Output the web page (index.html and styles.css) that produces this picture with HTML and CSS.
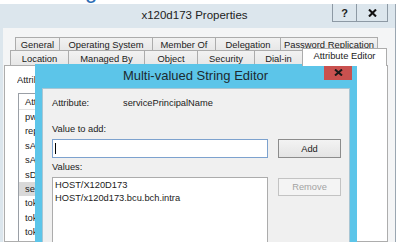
FILE: index.html
```html
<!DOCTYPE html>
<html>
  <head>
    <meta charset="utf-8">
    <title>x120d173 Properties</title>
    <link rel="stylesheet" href="styles.css">
  </head>
<body>
  <div class="screen">
    <div class="peek"><span>g</span></div>

    <div class="props">
      <div class="props-bar">
        <div class="props-title">x120d173 Properties</div>
        <div class="caption-buttons">
          <button class="caption-btn caption-help">?</button>
          <button class="caption-btn caption-close">
            <svg width="9" height="8" viewBox="0 0 9 8"><path d="M1 0.5 L8 7.5 M8 0.5 L1 7.5" stroke="#111" stroke-width="2.1"/></svg>
          </button>
        </div>
      </div>

      <div class="props-client">
        <div class="tab-row tab-row-back">
          <div class="tab">General</div>
          <div class="tab">Operating System</div>
          <div class="tab">Member Of</div>
          <div class="tab">Delegation</div>
          <div class="tab">Password Replication</div>
        </div>
        <div class="tab-row tab-row-front">
          <div class="tab">Location</div>
          <div class="tab">Managed By</div>
          <div class="tab">Object</div>
          <div class="tab">Security</div>
          <div class="tab">Dial-in</div>
          <div class="tab tab-active">Attribute Editor</div>
        </div>

        <div class="tab-panel">
          <!-- only the left strip of the page shows beside the editor -->
          <div class="panel-strip">
            <div class="field-label">Attributes:</div>
            <div class="attr-list">
              <div class="attr-head">Attribute</div>
              <div class="attr-item">pwdLastSet</div>
              <div class="attr-item">replPropertyMetaData</div>
              <div class="attr-item">sAMAccountName</div>
              <div class="attr-item">sAMAccountType</div>
              <div class="attr-item">sDRightsEffective</div>
              <div class="attr-item attr-selected">servicePrincipalName</div>
              <div class="attr-item">tokenGroups</div>
              <div class="attr-item">tokenGroupsGlobalAndUniversal</div>
              <div class="attr-item">tokenGroupsNoGCAcceptable</div>
            </div>
          </div>
        </div>
      </div>
    </div>

    <!-- editor window opened on top of the properties sheet -->
    <div class="mv-dialog">
      <div class="mv-bar">
        <div class="mv-title">Multi-valued String Editor</div>
        <button class="mv-close">
          <svg width="9" height="7" viewBox="0 0 9 7"><path d="M1 0.5 L8 6.5 M8 0.5 L1 6.5" stroke="#1a1a1a" stroke-width="2"/></svg>
        </button>
      </div>
      <div class="mv-body">
        <div class="mv-row">
          <span class="mv-label">Attribute:</span>
          <span>servicePrincipalName</span>
        </div>
        <div class="mv-caption mv-caption-first">Value to add:</div>
        <div class="mv-grid">
          <div class="mv-input"><span class="caret"></span></div>
          <button class="mv-btn mv-btn-default">Add</button>
        </div>
        <div class="mv-caption">Values:</div>
        <div class="mv-grid">
          <div class="mv-values">
            <div>HOST/X120D173</div>
            <div>HOST/x120d173.bcu.bch.intra</div>
          </div>
          <button class="mv-btn mv-btn-remove" disabled>Remove</button>
        </div>
      </div>
    </div>
  </div>
</body>
</html>
```

FILE: styles.css
```css
html, body {
  margin: 0;
}
body {
  width: 403px;
  height: 242px;
  overflow: hidden;
  background: #fff;
  font-family: "Liberation Sans", Arial, sans-serif;
  font-size: 9.4px;
  color: #1b1b1b;
}
button {
  font-family: inherit;
  font-size: inherit;
  color: inherit;
  padding: 0;
  margin: 0;
}
.screen {
  position: relative;
  width: 403px;
  height: 242px;
  overflow: hidden;
}

/* bit of the page behind the window */
.peek {
  height: 4px;
  overflow: hidden;
  padding-left: 85px;
}
.peek span {
  display: block;
  font-size: 22px;
  line-height: 22px;
  margin-top: -20px;
  color: #2d6db5;
}

/* properties window */
.props {
  width: 395px;
  height: 238px;
  border-right: 1px solid #9aa6b1;
  background: #dce6ed;
  display: flex;
  flex-direction: column;
}
.props-bar {
  height: 24px;
  display: flex;
  align-items: flex-start;
  flex: 0 0 auto;
}
.props-title {
  flex: 1;
  text-align: center;
  padding-left: 57px;
  font-size: 11.5px;
  line-height: 22px;
  color: #222;
}
.caption-buttons {
  display: flex;
  margin-right: 7px;
  border: 1px solid #8d99a4;
  border-top: none;
}
.caption-btn {
  height: 17px;
  border: none;
  background: #dce6ed;
  display: flex;
  align-items: center;
  justify-content: center;
}
.caption-help {
  width: 24px;
  border-right: 1px solid #8d99a4;
  font-weight: bold;
  font-size: 11px;
}
.caption-close {
  width: 30px;
}

.props-client {
  flex: 1;
  margin-left: 3px;
  background: #f4f5f6;
  padding-top: 9px;
  display: flex;
  flex-direction: column;
  min-height: 0;
}
.tab-row {
  display: grid;
  flex: 0 0 auto;
}
.tab-row-back {
  height: 13px;
  padding-left: 12px;
  grid-template-columns: 44px 93px 63px 65px 98px;
}
.tab-row-front {
  height: 15px;
  padding-left: 7px;
  grid-template-columns: 58px 76px 53px 57px 48px 85px;
}
.tab {
  border-top: 1px solid #acacac;
  border-left: 1px solid #acacac;
  background: linear-gradient(#f2f2f2, #e7e7e7);
  text-align: center;
  line-height: 13px;
  white-space: nowrap;
  overflow: hidden;
}
.tab:last-child {
  border-right: 1px solid #acacac;
}
.tab-row-front .tab {
  line-height: 15px;
}
.tab-active {
  position: relative;
  z-index: 1;
  background: #fff;
  margin-top: -2px;
  margin-bottom: -1px;
  line-height: 14px !important;
}

.tab-panel {
  flex: 1;
  background: #fff;
  border: 1px solid #adadad;
  margin: 0 7px 0 1px;
  padding: 8px 0 0 12px;
  overflow: hidden;
}
.panel-strip {
  width: 21px;
  overflow: hidden;
}
.field-label {
  line-height: 12px;
  white-space: nowrap;
}
.attr-list {
  margin: 7px 0 0 1px;
  width: 340px;
  height: 200px;
  border: 1px solid #9a9fa6;
}
.attr-head {
  height: 15px;
  line-height: 15px;
  padding-left: 6px;
  border-bottom: 1px solid #e3e3e3;
}
.attr-item {
  height: 14.4px;
  line-height: 14.4px;
  padding-left: 6px;
  white-space: nowrap;
}
.attr-selected {
  background: #d9d9d9;
}

/* multi-valued string editor */
.mv-dialog {
  position: absolute;
  left: 35px;
  top: 64px;
  width: 322px;
  height: 200px;
  box-sizing: border-box;
  padding: 0 7px;
  background: #5cc5e9;
  display: flex;
  flex-direction: column;
}
.mv-bar {
  height: 24px;
  display: flex;
  align-items: flex-start;
  flex: 0 0 auto;
}
.mv-title {
  flex: 1;
  text-align: center;
  padding-left: 25px;
  font-size: 13px;
  line-height: 24px;
  color: #1d2a30;
}
.mv-close {
  width: 28px;
  height: 16px;
  margin-right: -2px;
  border: none;
  background: #c9514f;
  display: flex;
  align-items: center;
  justify-content: center;
}
.mv-body {
  flex: 1;
  background: #f0f0f0;
  border: 1px solid #a8c6d4;
  padding: 8px 9px 0 9px;
  font-size: 9.3px;
}
.mv-row {
  display: flex;
  line-height: 12px;
}
.mv-label {
  width: 71px;
}
.mv-caption {
  line-height: 12px;
  margin-top: 3px;
}
.mv-caption-first {
  margin-top: 14px;
}
.mv-grid {
  display: grid;
  grid-template-columns: 216px 63px;
  column-gap: 10px;
  align-items: start;
  margin-top: 4px;
}
.mv-input {
  height: 19px;
  box-sizing: border-box;
  border: 1px solid #7da2ce;
  background: #fff;
}
.caret {
  display: block;
  width: 1px;
  height: 11px;
  margin: 3px 0 0 2px;
  background: #000;
}
.mv-btn {
  height: 19px;
  border: 1px solid #8c8c8c;
  background: linear-gradient(#f3f3f3, #e4e4e4);
}
.mv-btn-remove {
  height: 18px;
  margin-top: 1px;
  border-color: #c3c3c3;
  background: #f4f4f4;
  color: #a3a3a3;
}
.mv-values {
  height: 80px;
  box-sizing: border-box;
  border: 1px solid #acacac;
  background: #fff;
  padding: 1px 2px;
  line-height: 12.5px;
}
```
